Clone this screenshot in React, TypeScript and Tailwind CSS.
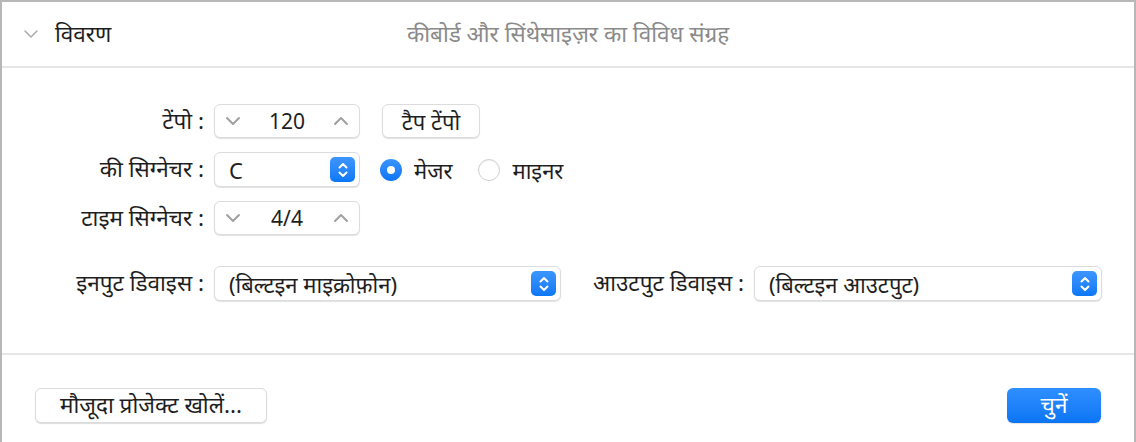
import { ChevronDown, ChevronUp } from 'lucide-react'

const font = { fontFamily: '"Noto Sans", "Noto Sans Devanagari", "Lohit Devanagari", sans-serif' }

const Stepper = ({ value }: { value: string }) => (
  <div className="flex h-[34px] w-[146px] items-center justify-between rounded-[6px] border border-[#dcdcdc] bg-white px-[6px] shadow-[0_1px_1px_rgba(0,0,0,0.12)]">
    <ChevronDown size={24} strokeWidth={2} className="text-[#a0a0a0]" />
    <span className="text-[21px] leading-none text-[#1e1e1e]">{value}</span>
    <ChevronUp size={24} strokeWidth={2} className="text-[#a0a0a0]" />
  </div>
)

const BlueArrows = () => (
  <div className="flex h-[25px] w-[25px] items-center justify-center rounded-[5px] bg-gradient-to-b from-[#3d96ff] to-[#0b77f6]">
    <svg width="12" height="18" viewBox="0 0 12 18" fill="none" stroke="white" strokeWidth="2" strokeLinecap="round" strokeLinejoin="round">
      <path d="M2.5 6.5 L6 3 L9.5 6.5" />
      <path d="M2.5 11.5 L6 15 L9.5 11.5" />
    </svg>
  </div>
)

const Select = ({ value, width }: { value: string; width: string }) => (
  <div className={`flex h-[35px] items-center justify-between rounded-[6px] border border-[#dcdcdc] bg-white pl-[14px] pr-[4px] shadow-[0_1px_1px_rgba(0,0,0,0.12)] ${width}`}>
    <span className="text-[22px] leading-none text-[#1e1e1e]">{value}</span>
    <BlueArrows />
  </div>
)

const Radio = ({ checked, label }: { checked: boolean; label: string }) => (
  <div className="flex items-center gap-[12px]">
    {checked ? (
      <div className="flex h-[22px] w-[22px] items-center justify-center rounded-full bg-gradient-to-b from-[#3893ff] to-[#0a76f5]">
        <div className="h-[8px] w-[8px] rounded-full bg-white" />
      </div>
    ) : (
      <div className="h-[22px] w-[22px] rounded-full border border-[#cfcfcf] bg-white shadow-[inset_0_1px_1px_rgba(0,0,0,0.06)]" />
    )}
    <span className="text-[22px] leading-none text-[#1e1e1e]">{label}</span>
  </div>
)

const Label = ({ children }: { children: string }) => (
  <div className="w-[203px] shrink-0 pr-[1px] text-right text-[22.5px] leading-none text-[#1e1e1e]">{children}</div>
)

export default function App() {
  return (
    <div style={font} className="flex h-[442px] w-[1136px] flex-col border-x-2 border-t-2 border-[#b8b8b8] bg-white">
      <div className="grid h-[66px] grid-cols-[1fr_auto_1fr] items-center border-b-2 border-[#e6e6e6]">
        <div className="flex items-center gap-[12px] pl-[17px]">
          <ChevronDown size={24} strokeWidth={1.5} className="text-[#ababab]" />
          <span className="text-[22.5px] leading-none text-[#1e1e1e]">विवरण</span>
        </div>
        <div className="text-[22.5px] leading-none text-[#8a8a8a]">कीबोर्ड और सिंथेसाइज़र का विविध संग्रह</div>
        <div />
      </div>

      <div className="flex h-[287px] flex-col border-b-2 border-[#e6e6e6] pt-[36px]">
        <div className="flex items-center">
          <Label>टेंपो :</Label>
          <div className="ml-[9px] flex items-center gap-[22px]">
            <Stepper value="120" />
            <div className="flex h-[34px] w-[98px] items-center justify-center rounded-[6px] border border-[#dcdcdc] bg-white text-[22px] leading-none text-[#1e1e1e] shadow-[0_1px_1px_rgba(0,0,0,0.12)]">
              टैप टेंपो
            </div>
          </div>
        </div>

        <div className="mt-[14px] flex items-center">
          <Label>की सिग्नेचर :</Label>
          <div className="ml-[9px] flex items-center gap-[20px]">
            <Select value="C" width="w-[146px]" />
            <div className="flex items-center gap-[26px]">
              <Radio checked label="मेजर" />
              <Radio checked={false} label="माइनर" />
            </div>
          </div>
        </div>

        <div className="mt-[14px] flex items-center">
          <Label>टाइम सिग्नेचर :</Label>
          <div className="ml-[9px]">
            <Stepper value="4/4" />
          </div>
        </div>

        <div className="mt-[31px] flex items-center">
          <Label>इनपुट डिवाइस :</Label>
          <div className="ml-[9px]">
            <Select value="(बिल्टइन माइक्रोफ़ोन)" width="w-[347px]" />
          </div>
          <div className="ml-[32px] w-[150px] text-[22.5px] leading-none whitespace-nowrap text-[#1e1e1e]">आउटपुट डिवाइस :</div>
          <div className="ml-[11px]">
            <Select value="(बिल्टइन आउटपुट)" width="w-[348px]" />
          </div>
        </div>
      </div>

      <div className="flex items-center justify-between px-[33px] pt-[33px]">
        <div className="flex h-[35px] w-[232px] items-center justify-center rounded-[6px] border border-[#dcdcdc] bg-white text-[22.5px] leading-none text-[#1e1e1e] shadow-[0_1px_1px_rgba(0,0,0,0.14)]">
          मौजूदा प्रोजेक्ट खोलें...
        </div>
        <div className="flex h-[35px] w-[94px] items-center justify-center rounded-[6px] bg-gradient-to-b from-[#2f8fff] to-[#0a75f4] text-[22.5px] leading-none text-white shadow-[0_1px_1px_rgba(0,0,0,0.12)]">
          चुनें
        </div>
      </div>
    </div>
  )
}
